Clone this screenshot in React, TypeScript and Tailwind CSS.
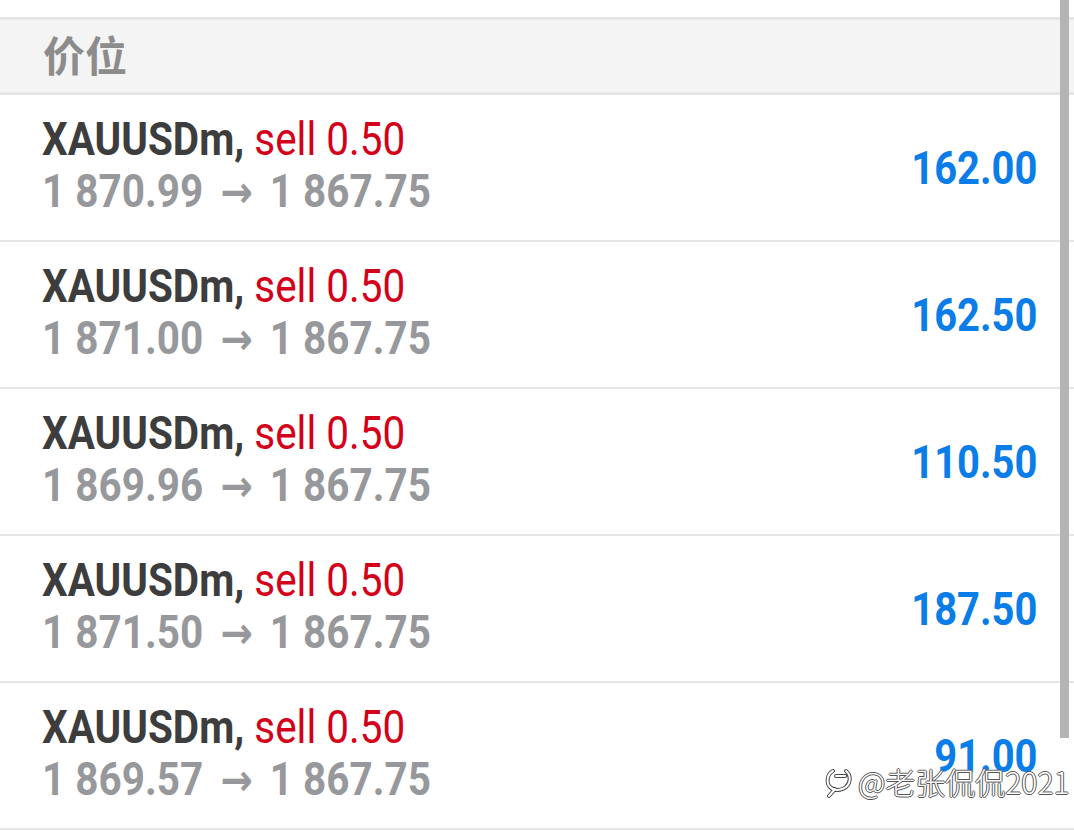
import React from "react";

const rows = [
  { open: "1 870.99", value: "162.00" },
  { open: "1 871.00", value: "162.50" },
  { open: "1 869.96", value: "110.50" },
  { open: "1 871.50", value: "187.50" },
  { open: "1 869.57", value: "91.00" },
];

export default function App() {
  return (
    <div className="relative w-[1074px] h-[830px] overflow-hidden bg-white font-['Roboto',sans-serif]">
      <div className="h-[17px]" />
      <div className="box-border h-[78px] border-y-[3px] border-[#e6e6e6] bg-[#f4f4f4] pl-[43px] flex items-center">
        <span className="pb-[4px] text-[42px] leading-none font-bold text-[#8c8c8c] font-['Noto_Sans_CJK_SC',sans-serif]">
          价位
        </span>
      </div>
      {rows.map((r, i) => (
        <div
          key={i}
          className="box-border h-[147px] border-b-[2px] border-[#e6e6e6] flex items-center justify-between pl-[42px] pr-[37px]"
        >
          <div className="flex flex-col pb-[4px]">
            <span className="inline-block origin-left scale-x-[0.88] whitespace-nowrap text-[46px] leading-[52px] font-bold text-[#3d3d3d]">
              XAUUSDm, <span className="font-normal text-[#d4001a]">sell 0.50</span>
            </span>
            <span className="inline-block origin-left scale-x-[0.88] whitespace-nowrap text-[46px] leading-[52px] font-bold text-[#97989b]">
              {r.open}{" "}
              <span className="mx-[8px] font-['DejaVu_Sans',sans-serif] text-[44px] font-bold">→</span>{" "}
              1 867.75
            </span>
          </div>
          <span className="inline-block origin-right scale-x-[0.85] whitespace-nowrap text-[47px] leading-none font-bold text-[#0a7de9]">
            {r.value}
          </span>
        </div>
      ))}
      {/* scrollbar */}
      <div className="absolute left-[1060px] top-0 w-[9px] h-[738px] bg-[#b4b4b4]" />
      {/* watermark */}
      <div className="absolute left-[824px] top-[763px] flex items-center gap-[4px]">
        <svg width="30" height="36" viewBox="0 0 30 36">
          <g fill="none" strokeLinecap="round" strokeLinejoin="round">
            <path d="M9 8 C3 11 2 20 6 24 C10 28 17 28 22 24 C27 19 27 12 22 8 M5 33 L11 26 M12 13 L21 13" stroke="#4a4a4a" strokeWidth="4" />
            <path d="M9 8 C3 11 2 20 6 24 C10 28 17 28 22 24 C27 19 27 12 22 8 M5 33 L11 26 M12 13 L21 13" stroke="#fff" strokeWidth="2" />
          </g>
        </svg>
        <span className="whitespace-nowrap text-[30px] leading-none font-light text-white font-['Noto_Sans_CJK_SC',sans-serif] [text-shadow:1px_0_0_#555,-1px_0_0_#555,0_1px_0_#555,0_-1px_0_#555]">
          @老张侃侃2021
        </span>
      </div>
    </div>
  );
}
